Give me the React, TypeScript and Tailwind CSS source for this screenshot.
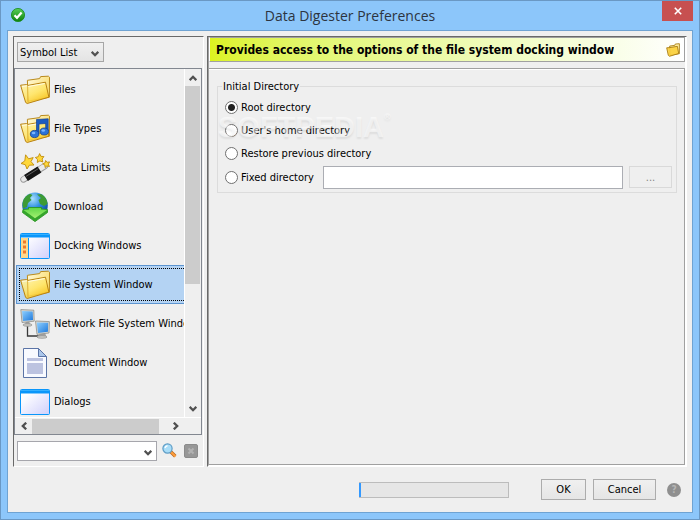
import { useState } from "react";
import type { ReactNode } from "react";

function Folder({ children }: { children?: ReactNode }) {
  return (
    <svg viewBox="0 0 30 30" className="size-[30px] shrink-0" aria-hidden="true">
      <defs>
        <linearGradient id="folderFront" x1="0" y1="0" x2="0.6" y2="1">
          <stop offset="0" stopColor="#fff6b8" />
          <stop offset="0.6" stopColor="#ffe566" />
          <stop offset="1" stopColor="#f7c21c" />
        </linearGradient>
        <linearGradient id="folderBack" x1="0" y1="0" x2="1" y2="0.4">
          <stop offset="0" stopColor="#fff9d8" />
          <stop offset="1" stopColor="#fbe07a" />
        </linearGradient>
      </defs>
      <path d="M8 26.2 7.4 5.3 19.6 3.6 20.6 1.6 28.4 1.2 29.5 2.2 29.4 22.2Z" fill="url(#folderBack)" stroke="#b98a1d" />
      <path d="M.6 10.200 6.600 9.600 7.900 10.400 25.500 7.200 28.900 22.200 7.200 28.500 5.600 27.400Z" fill="url(#folderFront)" fillOpacity=".88" stroke="#b98212" />
      <path d="m2 11.400 4.800-.6.9.8 17-3.100" fill="none" stroke="#fffce4" />
      <path d="M7.600 10.500 8 27.400" fill="none" stroke="#d9a72c" strokeWidth=".8" />
      {children}
    </svg>
  );
}

function MusicFolder() {
  return (
    <Folder>
      <path d="M16.500 5.500 28.200 4.800V17H25.700V9.500L19 10V20H16.500Z" fill="#1c5cc0" stroke="#123f91" strokeWidth=".7" />
      <ellipse cx="14.600" cy="20" rx="4.300" ry="3.600" fill="#2b73d8" stroke="#123f91" strokeWidth=".8" />
      <ellipse cx="24.300" cy="17.500" rx="4.200" ry="3.500" fill="#2b73d8" stroke="#123f91" strokeWidth=".8" />
      <ellipse cx="13.600" cy="19" rx="1.800" ry="1.200" fill="#79b5ff" />
      <ellipse cx="23.300" cy="16.500" rx="1.800" ry="1.200" fill="#79b5ff" />
    </Folder>
  );
}

function Wand() {
  return (
    <svg viewBox="0 0 30 30" className="size-[30px] shrink-0" aria-hidden="true">
      <path d="M3.500 26.500 25 13" stroke="#9a9a9a" strokeWidth="6.400" strokeLinecap="round" />
      <path d="M3.500 26.300 25 12.800" stroke="#e9e9e9" strokeWidth="4.800" strokeLinecap="round" />
      <path d="M6 25 19.500 16.500" stroke="#151515" strokeWidth="7" />
      <path d="M6 23.400 18.500 15.500" stroke="#666" strokeWidth=".9" />
      <path d="m5.600 1.800 3 4 4.600-1.200-2.200 4 3 3.400-4.600.2L7 16l-1.700-4.300L1 10.500l3.800-2.600Z" fill="#ffd83a" stroke="#c08c0c" strokeWidth=".9" strokeLinejoin="round" />
      <path d="m19.600.6 1.300 2.700 3 .3-1.800 2.400.7 3-2.900-1.100-2.600 1.600.2-3-2.200-2 3-.8Z" fill="#ffd83a" stroke="#c08c0c" strokeWidth=".9" strokeLinejoin="round" />
      <path d="m25.600 7.500 1.500 1.800 2.500-.4-1.200 2.200 1 2.400-2.500-.6-1.800 1.700-.2-2.600-2.200-1.200 2.400-1Z" fill="#ffd83a" stroke="#c08c0c" strokeWidth=".9" strokeLinejoin="round" />
    </svg>
  );
}

function Globe() {
  return (
    <svg viewBox="0 0 30 30" className="size-[30px] shrink-0" aria-hidden="true">
      <defs>
        <radialGradient id="globeSea" cx=".4" cy=".25" r=".8">
          <stop offset="0" stopColor="#a9e0ff" />
          <stop offset=".45" stopColor="#2f8fe0" />
          <stop offset="1" stopColor="#0a3c94" />
        </radialGradient>
        <linearGradient id="globeArrow" x1="0" y1="0" x2="0" y2="1">
          <stop offset="0" stopColor="#62d84a" />
          <stop offset="1" stopColor="#a4f070" />
        </linearGradient>
      </defs>
      <circle cx="15" cy="13.200" r="12.800" fill="url(#globeSea)" />
      <path d="M3 9Q5 3.600 10 1.700L12.500 3 10 6 11.500 8 8 11 7 15 3 16.500Q1.800 12 3 9ZM17 2.500 21 2Q27 5 27.500 12L24 14 20 12 18.500 8 21 6Z" fill="#3d9b34" />
      <path d="M3 17.500 8.500 17V15.500H21.500V17L27.500 17.500V20.500L15 29.600 2.500 20.500Z" fill="#35a52b" stroke="#2c9a24" strokeWidth=".9" strokeLinejoin="round" />
      <path d="M3.500 18 9 17.500V16H21V17.500L27 18 15 26.200Z" fill="url(#globeArrow)" />
    </svg>
  );
}

function WindowIcon({ docked = false }: { docked?: boolean }) {
  return (
    <svg viewBox="0 0 30 30" className="size-[30px] shrink-0" aria-hidden="true">
      <defs>
        <linearGradient id="pane" x1="0" y1="0" x2="1" y2="1">
          <stop offset=".2" stopColor="#ffffff" />
          <stop offset="1" stopColor="#cfcffb" />
        </linearGradient>
      </defs>
      <rect x=".5" y="2.500" width="29" height="25" rx="1" fill="url(#pane)" stroke="#0a96fa" />
      <path d="M1 3H29V6.500H1Z" fill="#0a96fa" />
      <path d="M1 3.500H29" stroke="#35b0ff" />
      {docked && (
        <>
          <path d="M1 7H8V27H1Z" fill="#ffd88a" />
          <path d="M8.500 7V27" stroke="#0a96fa" />
          <path d="M3 9.500H6V12.500H3ZM3 14.500H6V17.500H3ZM3 19.500H6V22.500H3Z" fill="#f07a28" />
        </>
      )}
    </svg>
  );
}

function Network() {
  return (
    <svg viewBox="0 0 30 30" className="size-[30px] shrink-0" aria-hidden="true">
      <defs>
        <linearGradient id="screen" x1="0" y1="0" x2="1" y2="1">
          <stop offset="0" stopColor="#8fd0ff" />
          <stop offset="1" stopColor="#1d78dc" />
        </linearGradient>
      </defs>
      <path d="M7.500 15V27H19" fill="none" stroke="#3a3a3a" strokeWidth="1.300" />
      <path d="M6 12H9L10 15H5Z" fill="#a0a0a0" />
      <ellipse cx="7.500" cy="16" rx="4.600" ry="1.400" fill="#c4c4c0" stroke="#858585" strokeWidth=".5" />
      <path d="M.8.600 13.800 1.200 14.200 12.200 2 13.500Z" fill="#d7d7d2" stroke="#8f8f8a" strokeWidth=".8" />
      <path d="M2 2 12.700 2.400 13 11 3 12Z" fill="url(#screen)" />
      <path d="M20 24H25L27 28.800H17Z" fill="#a0a0a0" />
      <ellipse cx="22" cy="28" rx="5" ry="1.400" fill="#c4c4c0" stroke="#858585" strokeWidth=".5" />
      <path d="M15.500 12 29.400 12.600 29 24 17 25.400Z" fill="#d7d7d2" stroke="#8f8f8a" strokeWidth=".8" />
      <path d="M16.800 13.400 28.200 13.800 27.900 22.800 18 24Z" fill="url(#screen)" />
    </svg>
  );
}

function DocumentIcon() {
  return (
    <svg viewBox="0 0 30 30" className="size-[30px] shrink-0" aria-hidden="true">
      <path d="M3.500.500H18.500L26.500 8.500V29.500H3.500Z" fill="#f8faff" stroke="#5b74a6" />
      <path d="M18.500.500V8.500H26.500Z" fill="#aac6ea" stroke="#5b74a6" />
      <path d="M7 10H23V13H7ZM7 15H23V26H7Z" fill="#bcc3e0" />
    </svg>
  );
}

const items: { label: string; icon: ReactNode }[] = [
  { label: "Files", icon: <Folder /> },
  { label: "File Types", icon: <MusicFolder /> },
  { label: "Data Limits", icon: <Wand /> },
  { label: "Download", icon: <Globe /> },
  { label: "Docking Windows", icon: <WindowIcon docked /> },
  { label: "File System Window", icon: <Folder /> },
  { label: "Network File System Window", icon: <Network /> },
  { label: "Document Window", icon: <DocumentIcon /> },
  { label: "Dialogs", icon: <WindowIcon /> },
];

function Chevron({ className = "" }: { className?: string }) {
  return (
    <svg viewBox="0 0 8 8" className={`size-2 shrink-0 ${className}`} aria-hidden="true">
      <path d="M.7 1.800 4 5.200 7.300 1.800" fill="none" stroke="#505050" strokeWidth="2.300" />
    </svg>
  );
}

const directories = ["Root directory", "User's home directory", "Restore previous directory", "Fixed directory"];

export default function App() {
  const [selected, setSelected] = useState("File System Window");
  const [directory, setDirectory] = useState("Root directory");

  return (
    <div className="flex h-screen flex-col border border-[#6a98c4] bg-[#8cc6fa] px-[6px] pb-[6px] font-['DejaVu_Sans_Condensed','DejaVu_Sans',sans-serif] text-[11px] leading-[15px] text-black">
      <header className="grid h-[29px] shrink-0 grid-cols-[1fr_auto_1fr]">
        <svg viewBox="0 0 14 14" className="mt-[7px] ml-1 size-[14px]" aria-hidden="true">
          <defs>
            <linearGradient id="tick" x1="0" y1="0" x2="0" y2="1">
              <stop offset="0" stopColor="#58cf58" />
              <stop offset="1" stopColor="#0d820d" />
            </linearGradient>
          </defs>
          <circle cx="7" cy="7" r="6.600" fill="url(#tick)" stroke="#188a18" strokeWidth=".8" />
          <path d="M3.500 7.200 6 9.800 10.600 4.600" fill="none" stroke="#fff" strokeWidth="2.200" />
        </svg>
        <h1 className="self-center font-['Open_Sans',sans-serif] text-[14px] leading-5 text-[#2c3440]">Data Digester Preferences</h1>
        <button aria-label="Close" className="flex h-5 w-[31px] items-center justify-center justify-self-end bg-[#c75050]">
          <svg viewBox="0 0 8 8" className="size-2" aria-hidden="true">
            <path d="M.8.800 7.200 7.200M7.200.800.800 7.200" stroke="#fff" strokeWidth="1.600" />
          </svg>
        </button>
      </header>

      <main className="flex min-h-0 flex-1 flex-col border border-[#6fa3d2] bg-[#efefef] px-[5px] pt-[5px]">
        <div className="flex min-h-0 flex-1 gap-[3px]">
          <aside className="flex w-[191px] shrink-0 flex-col border-t border-r border-b border-l border-t-[#696969] border-r-white border-b-white border-l-[#696969]">
            <div className="relative mt-[5px] ml-[3px] w-[87px]">
              <select aria-label="Symbol group" className="h-5 w-full appearance-none border border-[#a6a6a6] bg-linear-to-b from-[#f0f0f0] to-[#e4e4e4] pl-[2px]">
                <option>Symbol List</option>
              </select>
              <Chevron className="pointer-events-none absolute top-[8px] right-[5px]" />
            </div>

            <div className="mt-[6px] mr-px flex min-h-0 flex-1 flex-col border border-[#828790]">
              <div className="flex min-h-0 flex-1 border-b border-white">
                <ul className="min-w-0 flex-1 overflow-hidden pt-px pl-px">
                  {items.map(({ label, icon }) => (
                    <li key={label}>
                      <button
                        onClick={() => setSelected(label)}
                        className={
                          selected === label
                            ? "h-[39px] w-full border-y border-l border-[#5c94d0] bg-[#b4d3f3] py-[2px] pl-[2px]"
                            : "h-[39px] w-full border-y border-l border-transparent py-[2px] pl-[2px]"
                        }
                      >
                        <span
                          className={
                            selected === label
                              ? "flex h-[33px] items-center gap-1 border-y border-l border-dotted border-black whitespace-nowrap"
                              : "flex h-[33px] items-center gap-1 border-y border-l border-transparent whitespace-nowrap"
                          }
                        >
                          {icon}
                          {label}
                        </span>
                      </button>
                    </li>
                  ))}
                </ul>
                <div className="flex w-[17px] shrink-0 flex-col items-center border-l border-white">
                  <button aria-label="Scroll up" className="flex h-[17px] w-full items-center justify-center">
                    <Chevron className="rotate-180" />
                  </button>
                  <div className="flex w-full flex-1 flex-col">
                    <div className="h-[63%] w-[15px] bg-[#cccccc]" />
                  </div>
                  <button aria-label="Scroll down" className="flex h-[17px] w-full items-center justify-center">
                    <Chevron />
                  </button>
                </div>
              </div>
              <div className="flex h-[16px] shrink-0 items-center pr-[17px]">
                <button aria-label="Scroll left" className="flex h-full w-[17px] items-center justify-center">
                  <Chevron className="rotate-90" />
                </button>
                <div className="flex flex-1">
                  <div className="h-[15px] w-[94%] bg-[#cccccc]" />
                </div>
                <button aria-label="Scroll right" className="flex h-full w-[17px] items-center justify-center">
                  <Chevron className="-rotate-90" />
                </button>
              </div>
            </div>

            <div className="flex h-[31px] shrink-0 items-center pl-[3px]">
              <div className="relative w-[140px]">
                <input type="text" aria-label="Search preferences" className="block h-5 w-full border border-[#a6a6ac] bg-white pr-5 pl-1 outline-none" />
                <Chevron className="pointer-events-none absolute top-[8px] right-[5px]" />
              </div>
              <button aria-label="Search" className="ml-[5px]">
                <svg viewBox="0 0 15 15" className="size-[15px]" aria-hidden="true">
                  <path d="m8.500 8.500 4.800 4.800" stroke="#b76a22" strokeWidth="3.400" />
                  <path d="m9 9 4.500 4.500" stroke="#ff9e3d" strokeWidth="2" />
                  <circle cx="5.500" cy="5.500" r="4.600" fill="#a9ddf8" stroke="#5d9cc6" strokeWidth="1.200" />
                  <path d="M3 5Q3.500 3 5.500 2.700" fill="none" stroke="#fff" strokeWidth="1.400" />
                </svg>
              </button>
              <button aria-label="Clear" disabled className="ml-[7px]">
                <svg viewBox="0 0 14 14" className="size-[14px]" aria-hidden="true">
                  <rect x=".5" y=".5" width="13" height="13" rx="1.500" fill="#979797" stroke="#8b8b8b" />
                  <path d="m4.500 4.500 5 5m0-5-5 5" stroke="#b2b2b2" strokeWidth="2" />
                </svg>
              </button>
            </div>
          </aside>

          <section className="flex min-w-0 flex-1 flex-col border-t border-r border-b border-l border-t-[#696969] border-r-white border-b-white border-l-[#696969]">
            <div className="flex min-h-0 flex-1 flex-col border-r border-b border-l border-r-white border-b-white border-l-[#a0a0a0]">
              <div className="flex h-[25px] shrink-0 items-center justify-between border border-t-[#a0a0a0] border-r-[#a0a0a0] border-b-[#a0a0a0] border-l-white bg-linear-to-r from-[#dcf31e] to-white pt-px pr-1 pl-[6px]">
                <h2 className="truncate text-[12px] leading-[15px] font-bold">Provides access to the options of the file system docking window</h2>
                <svg viewBox="0 0 16 16" className="size-[14px] shrink-0" aria-hidden="true">
                  <path d="M4.500 14 4.200 3.500 10 2.700 10.600 1.200 15.300.800V12.200Z" fill="#fff0a5" stroke="#a77a10" />
                  <path d="M.8 5.500 4.500 5.200 13 3.800 14.500 12 4 15.200 2.600 14Z" fill="#fbd03e" fillOpacity=".9" stroke="#a77a10" />
                </svg>
              </div>

              <div className="mt-[6px] min-h-0 flex-1 border-t border-r border-b border-[#a0a0a0]">
                <div className="relative h-full border-t border-white pt-[9px] pr-[7px] pl-2">
                  <fieldset className="border border-[#dcdcdc] pb-[3px] pl-2">
                    <legend className="-ml-1 px-px">Initial Directory</legend>
                    <div className="pt-[2px]">
                      {directories.map((name) => (
                        <div key={name} className={name === "Fixed directory" ? "flex h-6 items-center" : "flex h-[23px] items-center"}>
                          <label className={name === "Fixed directory" ? "flex w-[97px] shrink-0 items-center gap-[3px] whitespace-nowrap" : "flex items-center gap-[3px]"}>
                            <input
                              type="radio"
                              name="directory"
                              checked={directory === name}
                              onChange={() => setDirectory(name)}
                              className="-ml-px size-[13px] shrink-0 appearance-none rounded-full border border-[#707070] bg-white checked:bg-[radial-gradient(circle,#222_3px,#fff_4px)]"
                            />
                            {name}
                          </label>
                          {name === "Fixed directory" && (
                            <>
                              <input type="text" aria-label="Fixed directory path" className="h-[23px] min-w-0 flex-1 border border-[#abadb3] bg-white px-1 outline-none" />
                              <button aria-label="Browse" disabled className="mr-1 ml-[6px] h-[22px] w-[43px] border border-[#d9d9d9] text-[#838383]">
                                ...
                              </button>
                            </>
                          )}
                        </div>
                      ))}
                    </div>
                  </fieldset>
                  <div className="pointer-events-none absolute top-[41px] left-[9px] flex font-['Liberation_Sans',sans-serif] text-[29px] leading-8 font-bold text-white/50 [text-shadow:0_2px_2px_rgb(0_0_0/0.07)]">
                    SOFTPEDIA<span className="text-[9px] leading-3">®</span>
                  </div>
                </div>
              </div>
            </div>
          </section>
        </div>

        <footer className="flex h-[45px] shrink-0 items-center justify-end pr-[6px]">
          <div role="progressbar" aria-label="Progress" aria-valuenow={1} className="mr-8 h-4 w-[150px] border border-[#bcbcbc] bg-[#e6e6e6]">
            <div className="-ml-px h-full w-[2px] bg-[#3399ff]" />
          </div>
          <button className="mr-[7px] h-[21px] w-[45px] border border-[#acacac] bg-linear-to-b from-[#f0f0f0] to-[#e5e5e5]">OK</button>
          <button className="mr-[11px] h-[21px] w-[63px] border border-[#acacac] bg-linear-to-b from-[#f0f0f0] to-[#e5e5e5]">Cancel</button>
          <button aria-label="Help" disabled className="size-[14px] rounded-full bg-[#8f8f8f] text-[10px] leading-[14px] font-bold text-[#b5b5b5]">
            ?
          </button>
        </footer>
      </main>
    </div>
  );
}
